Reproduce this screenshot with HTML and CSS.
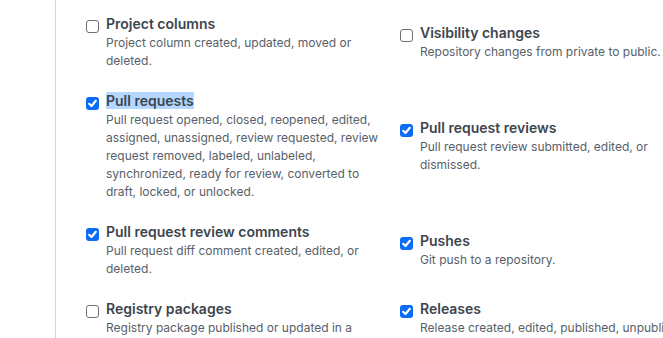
FILE: index.html
```html
<!DOCTYPE html>
<html lang="en">
<head>
<meta charset="utf-8">
<title>Webhook events</title>
<link rel="stylesheet" href="styles.css">
</head>
<body>
<div class="page">
  <div class="panel">
    <div class="events">
      <label class="event">
        <span class="box"></span>
        <span class="text">
          <span class="title">Project columns</span>
          <span class="desc">Project column created, updated, moved or<br>deleted.</span>
        </span>
      </label>
      <label class="event">
        <span class="box"></span>
        <span class="text">
          <span class="title">Visibility changes</span>
          <span class="desc">Repository changes from private to public.</span>
        </span>
      </label>
      <label class="event">
        <span class="box checked"><svg viewBox="0 0 13 13"><path d="M3.2 6.8 L5.5 9 L9.8 3.8" /></svg></span>
        <span class="text">
          <span class="title"><span class="sel">Pull requests</span></span>
          <span class="desc">Pull request opened, closed, reopened, edited,<br>assigned, unassigned, review requested, review<br>request removed, labeled, unlabeled,<br>synchronized, ready for review, converted to<br>draft, locked, or unlocked.</span>
        </span>
      </label>
      <label class="event">
        <span class="box checked"><svg viewBox="0 0 13 13"><path d="M3.2 6.8 L5.5 9 L9.8 3.8" /></svg></span>
        <span class="text">
          <span class="title">Pull request reviews</span>
          <span class="desc">Pull request review submitted, edited, or<br>dismissed.</span>
        </span>
      </label>
      <label class="event">
        <span class="box checked"><svg viewBox="0 0 13 13"><path d="M3.2 6.8 L5.5 9 L9.8 3.8" /></svg></span>
        <span class="text">
          <span class="title">Pull request review comments</span>
          <span class="desc">Pull request diff comment created, edited, or<br>deleted.</span>
        </span>
      </label>
      <label class="event">
        <span class="box checked"><svg viewBox="0 0 13 13"><path d="M3.2 6.8 L5.5 9 L9.8 3.8" /></svg></span>
        <span class="text">
          <span class="title">Pushes</span>
          <span class="desc">Git push to a repository.</span>
        </span>
      </label>
      <label class="event">
        <span class="box"></span>
        <span class="text">
          <span class="title">Registry packages</span>
          <span class="desc">Registry package published or updated in a</span>
        </span>
      </label>
      <label class="event">
        <span class="box checked"><svg viewBox="0 0 13 13"><path d="M3.2 6.8 L5.5 9 L9.8 3.8" /></svg></span>
        <span class="text">
          <span class="title">Releases</span>
          <span class="desc">Release created, edited, published, unpublished, or deleted.</span>
        </span>
      </label>
    </div>
  </div>
</div>
</body>
</html>
```

FILE: styles.css
```css
html, body {
  margin: 0;
  padding: 0;
  background: #ffffff;
  overflow: hidden;
}
body {
  width: 663px;
  height: 338px;
  font-family: Inter, "Liberation Sans", sans-serif;
}
.page {
  padding-left: 55px;
  height: 338px;
  overflow: hidden;
}
.panel {
  border-left: 1px solid #d1d5da;
  height: 100%;
  padding: 14px 0 0 30px;
  box-sizing: border-box;
}
.events {
  display: grid;
  grid-template-columns: 314px 314px;
  align-items: center;
  row-gap: 21px;
}
.event {
  display: flex;
  align-items: flex-start;
  white-space: nowrap;
}
.box {
  flex: none;
  width: 13px;
  height: 13px;
  box-sizing: border-box;
  margin: 6px 7px 0 0;
  border: 1px solid #6e6e73;
  border-radius: 3px;
  background: #fff;
}
.box.checked {
  border: none;
  background: #0b6cf7;
}
.box svg {
  display: block;
  width: 13px;
  height: 13px;
}
.box path {
  fill: none;
  stroke: #fff;
  stroke-width: 2.2;
  stroke-linecap: round;
  stroke-linejoin: round;
}
.text {
  display: flex;
  flex-direction: column;
}
.title {
  font-size: 14px;
  line-height: 20px;
  font-weight: 600;
  color: #3d454e;
}
.sel {
  background: #b3d7ff;
}
.desc {
  font-size: 12px;
  line-height: 18px;
  color: #586069;
}
```
